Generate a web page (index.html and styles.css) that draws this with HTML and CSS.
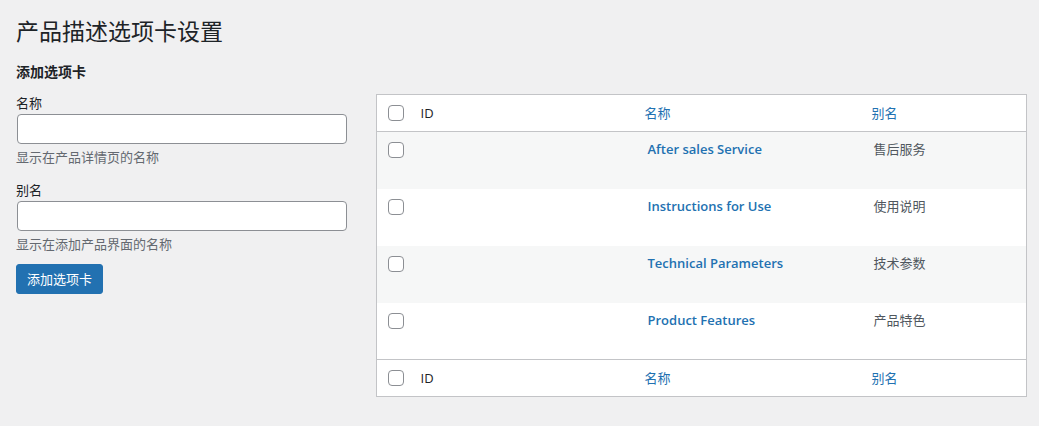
FILE: index.html
```html
<!DOCTYPE html>
<html lang="zh-CN">
<head>
<meta charset="utf-8">
<title>产品描述选项卡设置</title>
<link rel="stylesheet" href="styles.css">
</head>
<body>
<div class="wrap">
  <h1 class="page-title">产品描述选项卡设置</h1>
  <div class="col-wrap">
    <div class="col-left">
      <h2 class="form-title">添加选项卡</h2>
      <form class="tab-form">
        <div class="form-field">
          <label class="field-label" for="tab-name">名称</label>
          <input class="field-input" id="tab-name" type="text">
          <p class="field-desc">显示在产品详情页的名称</p>
        </div>
        <div class="form-field">
          <label class="field-label" for="tab-alias">别名</label>
          <input class="field-input" id="tab-alias" type="text">
          <p class="field-desc">显示在添加产品界面的名称</p>
        </div>
        <button class="btn-primary" type="button">添加选项卡</button>
      </form>
    </div>
    <div class="col-right">
      <table class="list-table">
        <colgroup>
          <col class="c-check">
          <col class="c-id">
          <col class="c-name">
          <col class="c-alias">
        </colgroup>
        <thead>
          <tr>
            <th class="check-col"><input class="cb" type="checkbox"></th>
            <th class="th-id">ID</th>
            <th class="th-link">名称</th>
            <th class="th-link">别名</th>
          </tr>
        </thead>
        <tbody>
          <tr class="row-alt">
            <td class="check-col"><input class="cb" type="checkbox"></td>
            <td></td>
            <td class="td-name"><a href="#">After sales Service</a></td>
            <td class="td-alias">售后服务</td>
          </tr>
          <tr>
            <td class="check-col"><input class="cb" type="checkbox"></td>
            <td></td>
            <td class="td-name"><a href="#">Instructions for Use</a></td>
            <td class="td-alias">使用说明</td>
          </tr>
          <tr class="row-alt">
            <td class="check-col"><input class="cb" type="checkbox"></td>
            <td></td>
            <td class="td-name"><a href="#">Technical Parameters</a></td>
            <td class="td-alias">技术参数</td>
          </tr>
          <tr>
            <td class="check-col"><input class="cb" type="checkbox"></td>
            <td></td>
            <td class="td-name"><a href="#">Product Features</a></td>
            <td class="td-alias">产品特色</td>
          </tr>
        </tbody>
        <tfoot>
          <tr>
            <th class="check-col"><input class="cb" type="checkbox"></th>
            <th class="th-id">ID</th>
            <th class="th-link">名称</th>
            <th class="th-link">别名</th>
          </tr>
        </tfoot>
      </table>
    </div>
  </div>
</div>
</body>
</html>
```
FILE: styles.css
```css
html, body {
  margin: 0;
  padding: 0;
}
body {
  background: #f0f0f1;
  color: #3c434a;
  font-family: "Open Sans", "Noto Sans CJK SC", sans-serif;
  font-size: 13px;
  line-height: 1.4;
  width: 1039px;
  height: 426px;
  overflow: hidden;
}
.wrap {
  padding: 16px 12px 0 16px;
}
.page-title {
  margin: 0;
  font-size: 23px;
  font-weight: 400;
  line-height: 30px;
  color: #1d2327;
}
.col-wrap {
  margin-top: 16px;
  display: grid;
  grid-template-columns: 332px 651px;
  column-gap: 28px;
  align-items: start;
}
.form-title {
  margin: 0 0 12px;
  font-size: 14px;
  font-weight: 700;
  line-height: 20px;
  color: #1d2327;
}
.tab-form {
  margin: 0;
}
.form-field {
  margin-bottom: 15px;
}
.form-field + .form-field {
  margin-bottom: 11px;
}
.field-label {
  display: block;
  line-height: 18px;
  color: #1d2327;
}
.field-input {
  display: block;
  box-sizing: border-box;
  margin: 2px 1px 0;
  width: 330px;
  height: 30px;
  border: 1px solid #8c8f94;
  border-radius: 4px;
  background: #fff;
  padding: 0 8px;
  font: inherit;
}
.field-desc {
  margin: 4px 0 0;
  line-height: 18px;
  color: #646970;
}
.btn-primary {
  display: block;
  box-sizing: border-box;
  height: 30px;
  padding: 0 10px;
  border: 1px solid #2271b1;
  border-radius: 3px;
  background: #2271b1;
  color: #fff;
  font: inherit;
  line-height: 28px;
}
.col-right {
  padding-top: 32px;
}
.list-table {
  width: 651px;
  table-layout: fixed;
  border-collapse: collapse;
  border: 1px solid #c3c4c7;
  background: #fff;
}
.c-check { width: 34px; }
.c-id { width: 224px; }
.c-name { width: 227px; }
.c-alias { width: auto; }
.list-table th {
  text-align: left;
  font-weight: 400;
  height: 36px;
  padding: 0 10px;
  vertical-align: middle;
  color: #2c3338;
}
.list-table tfoot th {
  height: 36px;
}
.list-table thead tr {
  border-bottom: 1px solid #c3c4c7;
}
.list-table tfoot tr {
  border-top: 1px solid #c3c4c7;
}
.list-table .th-id {
  color: #1d2327;
}
.list-table .th-link {
  color: #2271b1;
}
.list-table td {
  height: 57px;
  box-sizing: border-box;
  padding: 8px 10px 8px;
  vertical-align: top;
  line-height: 19px;
}
.list-table th.check-col,
.list-table td.check-col {
  padding: 0 0 0 11px;
}
.list-table td.check-col {
  padding-top: 10px;
}
.row-alt {
  background: #f6f7f7;
}
.td-name {
  padding-left: 13px !important;
}
.td-name a {
  color: #2271b1;
  font-weight: 600;
  text-decoration: none;
}
.td-alias {
  padding-left: 12px !important;
  color: #50575e;
}
.cb {
  -webkit-appearance: none;
  appearance: none;
  display: block;
  box-sizing: border-box;
  width: 16px;
  height: 16px;
  margin: 0;
  border: 1px solid #8c8f94;
  border-radius: 4px;
  background: #fff;
}
```
